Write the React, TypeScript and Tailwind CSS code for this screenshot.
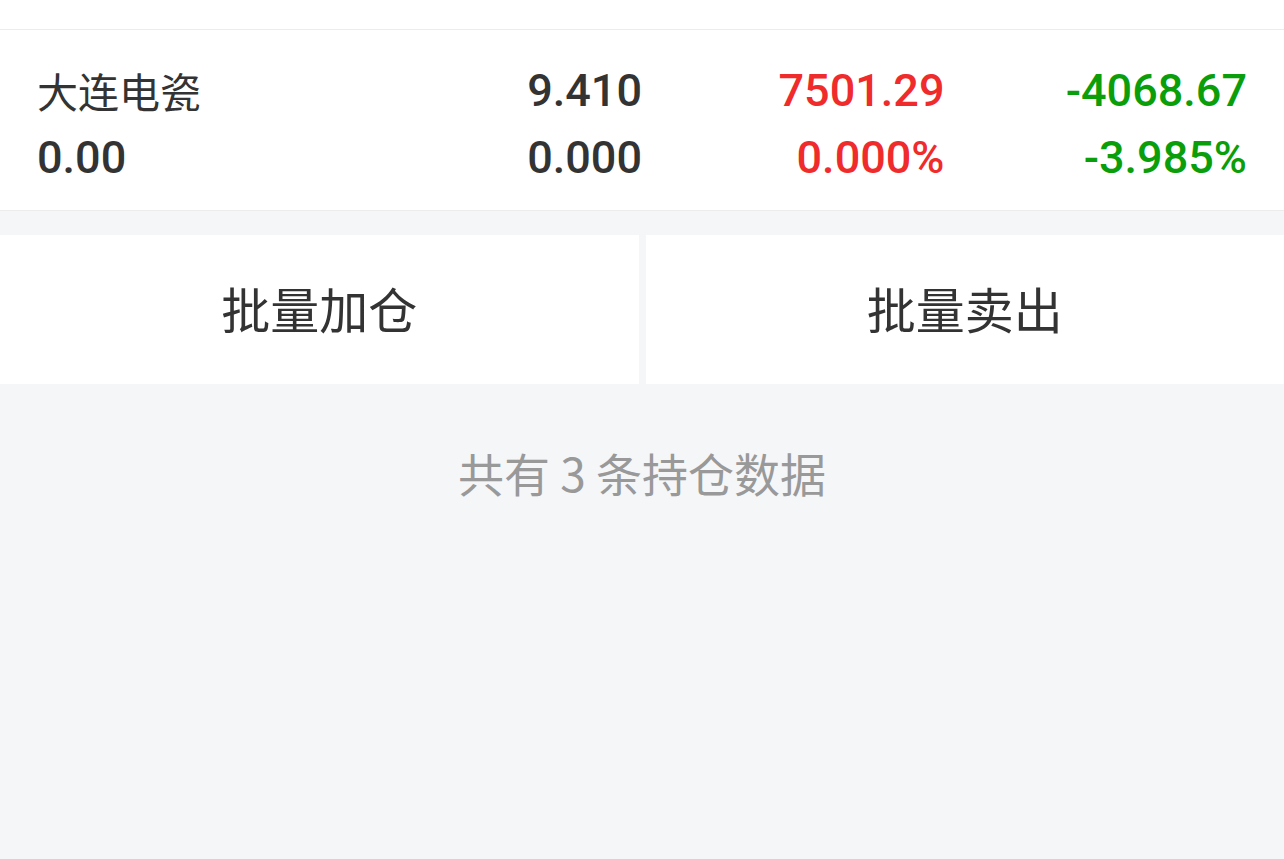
const num = "font-['Roboto','Liberation_Sans',sans-serif] font-medium";
const cjk = "font-['Noto_Sans_CJK_SC','Noto_Sans',sans-serif]";

export default function App() {
  return (
    <div className="min-h-[859px] w-full bg-[#f5f6f8]">
      <div className="h-[30px] bg-white border-b border-[#ececec]" />
      <div className="grid grid-cols-4 bg-white px-[37px] pt-[27px] h-[181px] border-b border-[#ececec] text-[#333]">
        <div className="flex flex-col">
          <span className={`${cjk} text-[41px] leading-[67px]`}>大连电瓷</span>
          <span className={`${num} text-[45px] leading-[67px]`}>0.00</span>
        </div>
        <div className="flex flex-col items-end">
          <span className={`${num} text-[45px] leading-[67px]`}>9.410</span>
          <span className={`${num} text-[45px] leading-[67px]`}>0.000</span>
        </div>
        <div className="flex flex-col items-end text-[#f02b2b]">
          <span className={`${num} text-[45px] leading-[67px]`}>7501.29</span>
          <span className={`${num} text-[45px] leading-[67px]`}>0.000%</span>
        </div>
        <div className="flex flex-col items-end text-[#0a9e0a]">
          <span className={`${num} text-[45px] leading-[67px]`}>-4068.67</span>
          <span className={`${num} text-[45px] leading-[67px]`}>-3.985%</span>
        </div>
      </div>
      <div className="mt-[24px] flex gap-[7px] h-[149px]">
        <button className={`${cjk} flex-1 bg-white text-[49px] leading-[60px] pb-[4px] text-[#333]`}>批量加仓</button>
        <button className={`${cjk} flex-1 bg-white text-[49px] leading-[60px] pb-[4px] text-[#333]`}>批量卖出</button>
      </div>
      <p className={`${cjk} mt-[58px] text-center text-[46px] leading-[60px] text-[#999]`}>共有 3 条持仓数据</p>
    </div>
  );
}
